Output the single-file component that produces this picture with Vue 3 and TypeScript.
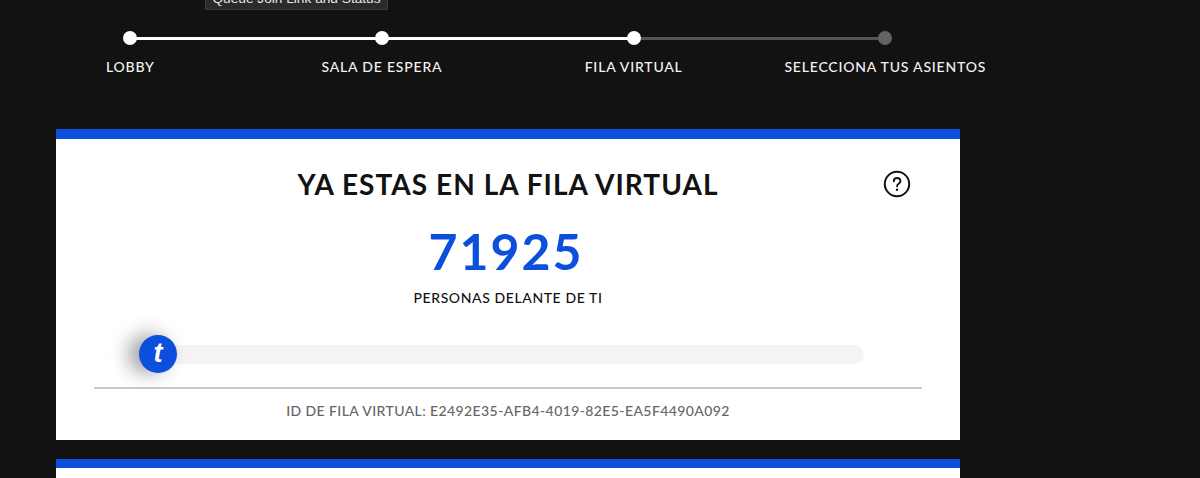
<script setup lang="ts">
interface Step {
  label: string;
  done: boolean;
  lineDone: boolean;
}

const steps: Step[] = [
  { label: 'LOBBY', done: true, lineDone: true },
  { label: 'SALA DE ESPERA', done: true, lineDone: true },
  { label: 'FILA VIRTUAL', done: true, lineDone: false },
  { label: 'SELECCIONA TUS ASIENTOS', done: false, lineDone: false },
];
</script>

<template>
  <div class="page">
    <div class="tooltip">Queue Join Link and Status</div>

    <ol class="stepper">
      <li v-for="(step, i) in steps" :key="step.label" class="step">
        <span
          v-if="i < steps.length - 1"
          class="line"
          :class="{ 'line-done': step.lineDone }"
        ></span>
        <span class="dot" :class="{ 'dot-done': step.done }"></span>
        <span class="step-label">{{ step.label }}</span>
      </li>
    </ol>

    <section class="card">
      <div class="card-head">
        <h1 class="title">YA ESTAS EN LA FILA VIRTUAL</h1>
        <svg class="help" width="28" height="28" viewBox="0 0 28 28" fill="none">
          <circle cx="14" cy="14" r="12.2" stroke="#121212" stroke-width="2" />
          <path
            d="M10.8 11.2c0-2 1.4-3.2 3.3-3.2s3.3 1.2 3.3 2.9c0 1.4-.8 2.1-1.8 2.8-1 .7-1.5 1.2-1.5 2.6"
            stroke="#121212"
            stroke-width="1.9"
            stroke-linecap="round"
          />
          <circle cx="14" cy="19.8" r="1.2" fill="#121212" />
        </svg>
      </div>
      <div class="count">71925</div>
      <div class="count-label">PERSONAS DELANTE DE TI</div>

      <div class="progress">
        <div class="track"></div>
        <div class="thumb">t</div>
      </div>

      <div class="queue-id">ID DE FILA VIRTUAL: E2492E35-AFB4-4019-82E5-EA5F4490A092</div>
    </section>

    <section class="card card-next"></section>
  </div>
</template>

<style>
body {
  background: #121212;
}
</style>

<style scoped>
.page {
  position: relative;
  height: 478px;
  overflow: hidden;
  background: #121212;
  font-family: Lato, "Noto Sans", sans-serif;
  padding: 31px 0 0 56px;
  box-sizing: border-box;
}

.tooltip {
  position: absolute;
  left: 205px;
  top: -9px;
  width: 183px;
  height: 19px;
  box-sizing: border-box;
  background: #2b2b2b;
  border: 1px solid #3a3a3a;
  color: #e8e8e8;
  font-family: "Liberation Sans", sans-serif;
  font-size: 13.7px;
  line-height: 14px;
  text-align: center;
  white-space: nowrap;
}

.stepper {
  list-style: none;
  margin: 0 0 0 -51.5px;
  padding: 0;
  display: grid;
  grid-template-columns: repeat(4, 251.67px);
}

.step {
  position: relative;
  display: flex;
  flex-direction: column;
  align-items: center;
  gap: 14px;
}

.line {
  position: absolute;
  left: 50%;
  top: 6px;
  width: 100%;
  height: 3px;
  background: #555;
}

.line-done {
  background: #fff;
}

.dot {
  position: relative;
  width: 14px;
  height: 14px;
  border-radius: 50%;
  background: #636363;
}

.dot-done {
  background: #fff;
}

.step-label {
  color: #f2f2f2;
  font-size: 14px;
  line-height: 16px;
  font-weight: 500;
  letter-spacing: 0.8px;
  white-space: nowrap;
}

.card {
  width: 904px;
  box-sizing: border-box;
  margin-top: 54px;
  background: #fff;
  border-top: 10px solid #0b4fdc;
  padding: 26px 38px 0;
  height: 311px;
}

.card-head {
  position: relative;
  display: flex;
  justify-content: center;
}

.title {
  margin: 0;
  color: #121212;
  font-size: 28px;
  line-height: 38px;
  font-weight: 700;
  letter-spacing: 1.05px;
  white-space: nowrap;
}

.help {
  position: absolute;
  right: 11px;
  top: 4.5px;
}

.count {
  margin-top: 18px;
  padding-right: 4px;
  color: #0b4fdc;
  font-size: 50px;
  line-height: 60px;
  font-weight: 700;
  letter-spacing: 2px;
  text-align: center;
}

.count-label {
  margin-top: 8px;
  color: #121212;
  font-size: 14px;
  line-height: 18px;
  font-weight: 500;
  letter-spacing: 0.6px;
  text-align: center;
}

.progress {
  position: relative;
  height: 54px;
  box-sizing: border-box;
  margin-top: 28px;
  padding: 10px 58px 0 45px;
  border-bottom: 2px solid #c9c9c9;
}

.track {
  height: 19px;
  background: #f4f4f4;
  border-radius: 10px;
}

.thumb {
  position: absolute;
  left: 45px;
  top: 0;
  width: 38px;
  height: 38px;
  border-radius: 50%;
  background: #0b4fdc;
  box-shadow: -10px 0 20px rgba(0, 0, 0, 0.4);
  color: #fff;
  font-family: "Liberation Sans", sans-serif;
  font-size: 27px;
  line-height: 37px;
  font-weight: 700;
  font-style: italic;
  text-align: center;
}

.queue-id {
  margin-top: 13px;
  color: #666;
  font-size: 14px;
  line-height: 18px;
  font-weight: 500;
  letter-spacing: 0.4px;
  text-align: center;
}

.card-next {
  margin-top: 19px;
  border-top-width: 9px;
}
</style>
